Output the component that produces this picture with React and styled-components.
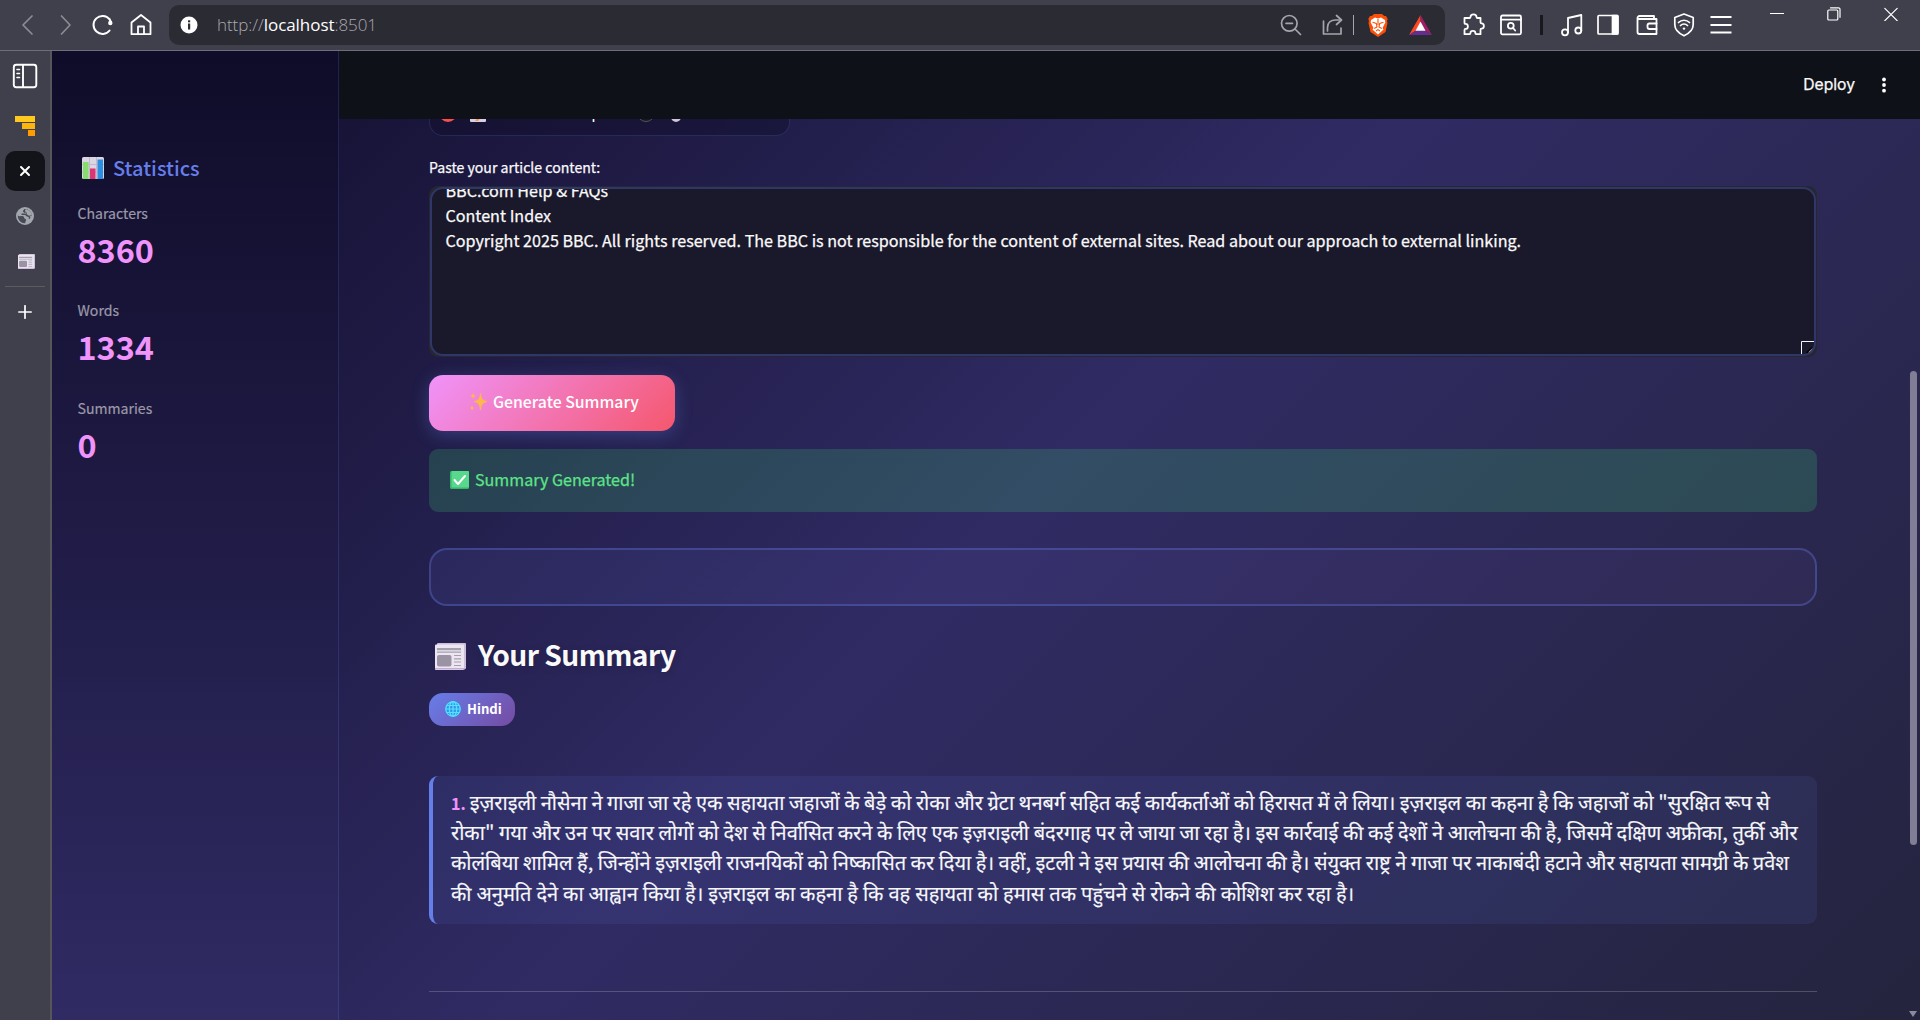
import React from 'react';
import styled, { createGlobalStyle, css } from 'styled-components';

const SANS = '"Noto Sans CJK SC", "Noto Sans", sans-serif';

const GlobalStyle = createGlobalStyle`
  * { box-sizing: border-box; }
  html, body { margin: 0; padding: 0; background: #24243e; overflow: hidden; }
  svg { display: block; flex: none; }
`;

const Window = styled.div`
  display: flex;
  flex-direction: column;
  width: 1920px;
  height: 1020px;
  overflow: hidden;
  font-family: ${SANS};
  color: #fafafa;
`;

/* ---------- browser toolbar ---------- */

const Toolbar = styled.header`
  display: flex;
  align-items: center;
  flex: none;
  height: 51px;
  padding-left: 13px;
  background: #3f404b;
  border-bottom: 1px solid #6d6e77;
`;

const NavButtons = styled.nav`
  display: flex;
  flex: none;
  gap: 10px;
  width: 156px;
`;

const AddressBar = styled.div`
  display: flex;
  align-items: center;
  flex: none;
  width: 1276px;
  height: 40px;
  padding: 0 7px 0 11px;
  border-radius: 10px;
  background: #2b2b33;
`;

const Url = styled.div`
  flex: 1;
  margin-left: 19px;
  font: 300 17px/24px "Open Sans", "Noto Sans", sans-serif;
  letter-spacing: -0.06px;
  color: #a9a9af;
  b { font-weight: 400; color: #fff; }
`;

const AddressTools = styled.div`
  display: flex;
  align-items: center;
`;

const ToolSlot = styled.div`
  display: flex;
  align-items: center;
  justify-content: center;
  flex: none;
  width: ${(p) => p.$w}px;
  height: 28px;
`;

const Rule = styled.span`
  width: ${(p) => p.$w}px;
  height: 20px;
  background: ${(p) => p.$c};
`;

const WindowButtons = styled.div`
  display: flex;
  align-self: flex-start;
  flex: none;
  height: 30px;
  margin-left: 11px;
  ${ToolSlot}:last-child { margin-left: 6px; }
`;

/* ---------- vertical tab strip ---------- */

const Body = styled.div`
  display: flex;
  flex: 1;
  min-height: 0;
`;

const Rail = styled.aside`
  display: flex;
  flex-direction: column;
  align-items: center;
  flex: none;
  width: 52px;
  background: #3f404b;
  border-right: 2px solid #55555a;
`;

const RailSlot = styled.div`
  display: flex;
  align-items: center;
  justify-content: center;
  flex: none;
  width: 40px;
  height: ${(p) => p.$h}px;
  padding-left: ${(p) => p.$shift || 0}px;
  ${(p) => p.$active && css`
    border-radius: 10px;
    background: #131419;
  `}
`;

const RailDivider = styled.div`
  width: 40px;
  height: 1px;
  margin-top: 4px;
  background: #5b5b60;
`;

/* ---------- application ---------- */

const AppShell = styled.div`
  display: flex;
  flex: 1;
  min-width: 0;
  background: linear-gradient(135deg, #0f0c29 0%, #302b63 50%, #24243e 100%);
`;

const Sidebar = styled.aside`
  flex: none;
  width: 287px;
  padding: 101px 25px 0 25.5px;
  background: linear-gradient(180deg, #0f0c29 0%, #302b63 100%);
  border-right: 1px solid rgba(102, 126, 234, 0.2);
`;

const SidebarTitle = styled.h3`
  display: flex;
  align-items: center;
  gap: 9px;
  height: 32px;
  margin: 0;
  padding-left: 4.5px;
  font-size: 20px;
  line-height: 32px;
  font-weight: 500;
  color: #667eea;
`;

const Stat = styled.div`
  height: 97.4px;
  padding-top: 17px;
`;

const StatLabel = styled.div`
  font-size: 14.1px;
  line-height: 24px;
  -webkit-text-stroke: 0.2px currentColor;
  color: #9b99a8;
`;

const StatValue = styled.div`
  margin-top: 4px;
  font-size: 32.4px;
  line-height: 40px;
  font-weight: 700;
  color: #f093fb;
`;

const Main = styled.main`
  display: flex;
  flex-direction: column;
  flex: 1;
  min-width: 0;
`;

const AppHeader = styled.div`
  display: flex;
  align-items: center;
  justify-content: flex-end;
  flex: none;
  height: 68px;
  padding-right: 27px;
  background: #0e1117;
`;

const Deploy = styled.span`
  margin-right: 20px;
  font: 400 15.7px/24px Inter, sans-serif;
  -webkit-text-stroke: 0.25px currentColor;
  color: #fafafa;
`;

const Scroller = styled.div`
  position: relative;
  flex: 1;
  min-height: 0;
  padding: 0 103px 0 90px;
  overflow: hidden;
`;

const ScrollThumb = styled.div`
  position: absolute;
  top: 252px;
  right: 3px;
  width: 7px;
  height: 474px;
  border-radius: 4px;
  background: #817d97;
`;

const ScrollArrow = styled.div`
  position: absolute;
  right: 3px;
  bottom: 3px;
  border: 4px solid transparent;
  border-top: 6px solid #8d8aa0;
  border-bottom: 0;
`;

const RadioGroup = styled.div`
  display: flex;
  align-items: center;
  width: 361px;
  height: 56px;
  margin-top: -39px;
  padding: 9px 9px 0;
  border: 1px solid rgba(102, 126, 234, 0.2);
  border-radius: 14px;
  background: rgba(15, 12, 41, 0.4);
`;

const Option = styled.label`
  display: flex;
  align-items: center;
  height: 28px;
  margin-right: 20px;
  svg { margin: 0 8px 0 13px; }
`;

const OptionText = styled.span`
  padding-bottom: 4px;
  font-size: 16.1px;
  line-height: 24px;
  white-space: nowrap;
`;

const RadioDot = styled.span`
  flex: none;
  width: 18px;
  height: 18px;
  border-radius: 50%;
  ${(p) => (p.$on
    ? css`border: 6px solid #ff4b4b; background: #fff;`
    : css`border: 1.5px solid #55565f; background: #16171f;`)}
`;

const FieldLabel = styled.div`
  margin-top: 19px;
  font-size: 14.1px;
  line-height: 24px;
  -webkit-text-stroke: 0.25px currentColor;
`;

const TextBox = styled.div`
  height: 171px;
  margin-top: 7px;
  padding: 1px;
  border-radius: 9px;
  background: #262730;
`;

const TextArea = styled.div`
  position: relative;
  height: 169px;
  padding: 0 13.5px;
  overflow: hidden;
  border: 2px solid #2f3768;
  border-radius: 13px;
  background: #1a182b;
`;

const TextLine = styled.div`
  font-size: 16.11px;
  line-height: 25.2px;
  white-space: nowrap;
  -webkit-text-stroke: 0.25px currentColor;
  &:first-child { margin-top: -11px; }
`;

const Grip = styled.svg`
  position: absolute;
  right: 0;
  bottom: 0;
`;

const PrimaryButton = styled.button`
  display: flex;
  align-items: center;
  gap: 5px;
  width: 246px;
  height: 56px;
  margin-top: 18px;
  padding: 0 0 2px 39px;
  border: 0;
  border-radius: 14px;
  background: linear-gradient(135deg, #f093fb 0%, #f5576c 100%);
  box-shadow: 0 4px 17px rgba(102, 126, 234, 0.32);
  font: 500 15.8px/28px ${SANS};
  color: #fff;
`;

const Alert = styled.div`
  display: flex;
  align-items: center;
  gap: 6px;
  height: 63px;
  margin-top: 18px;
  padding: 0 0 3px 21px;
  border-radius: 9px;
  background: rgba(61, 213, 109, 0.2);
  font-size: 16.1px;
  line-height: 28px;
  -webkit-text-stroke: 0.25px currentColor;
  color: #5de488;
  svg { margin-top: 1px; }
`;

const EmptyCard = styled.div`
  height: 58px;
  margin-top: 36px;
  border: 2px solid rgba(102, 126, 234, 0.33);
  border-radius: 18px;
  background: linear-gradient(135deg, rgba(102, 126, 234, 0.1), rgba(118, 75, 162, 0.1));
`;

const Heading = styled.h2`
  display: flex;
  align-items: center;
  gap: 12px;
  height: 40px;
  margin: 28px 0 0;
  padding-left: 6px;
  font-size: 28.2px;
  line-height: 40px;
  font-weight: 700;
  letter-spacing: -0.56px;
  text-shadow: 0 2px 9px rgba(0, 0, 0, 0.15);
  svg { margin-top: 5px; }
`;

const LanguageBadge = styled.div`
  display: flex;
  align-items: center;
  gap: 6px;
  width: 86px;
  height: 33px;
  margin-top: 19px;
  padding: 0 0 1px 16px;
  border-radius: 14px;
  background: linear-gradient(135deg, #667eea 0%, #764ba2 100%);
  font-size: 13.1px;
  line-height: 20px;
  font-weight: 700;
  color: #fff;
`;

const SummaryCard = styled.article`
  height: 148px;
  margin-top: 50px;
  padding: 11px 0 0 18px;
  border-left: 4px solid #667eea;
  border-radius: 9px;
  background: rgba(102, 126, 234, 0.1);
  font-size: 20px;
  -webkit-text-stroke: 0.15px currentColor;
  color: #f6f6fa;
`;

const SummaryLine = styled.div`
  height: 30.2px;
  line-height: 30.2px;
  white-space: nowrap;
  word-spacing: ${(p) => p.$gap}px;
`;

const Index = styled.b`
  margin-right: 4px;
  font-size: 16px;
  color: #f093fb;
`;

const Divider = styled.hr`
  height: 1px;
  margin: 67px 0 0;
  border: 0;
  background: rgba(250, 250, 250, 0.2);
`;

/* ---------- icons ---------- */

const Icon = ({ w = 28, h = w, box, stroke = '#fff', sw = 1.6, children }) => (
  <svg width={w} height={h} viewBox={box || `0 0 ${w} ${h}`} fill="none" stroke={stroke}
    strokeWidth={sw} strokeLinecap="round" strokeLinejoin="round">{children}</svg>
);

const Back = () => <Icon stroke="#8b8c94" sw={1.7}><path d="M19 5 10 14l9 9" /></Icon>;
const Forward = () => <Icon stroke="#8b8c94" sw={1.7}><path d="M10.500 5l8.500 9-8.500 9" /></Icon>;
const Reload = () => (
  <Icon sw={2}>
    <path d="M20.600 19.500A9 9 0 1 1 20.500 8.200" />
    <circle cx="21.300" cy="12" r="2.200" fill="#fff" stroke="none" />
    <path d="M20.500 8.200 22 11" />
  </Icon>
);
const Home = () => (
  <Icon sw={1.8}>
    <path d="M4.500 11.500 14 4l9.500 7.500v11.700h-19z" />
    <path d="M11 23v-7.500h6V23" />
  </Icon>
);
const Info = () => (
  <svg width="18" height="18" viewBox="0 0 18 18">
    <circle cx="9" cy="9" r="8.500" fill="#fff" />
    <rect x="8" y="7.500" width="2.200" height="6" fill="#2b2b33" />
    <rect x="8" y="4.300" width="2.200" height="2" fill="#2b2b33" />
  </svg>
);
const ZoomOut = () => (
  <Icon stroke="#a5a5ab" sw={1.7}>
    <circle cx="12.300" cy="12.300" r="7.800" /><path d="m18 18 5.500 5.500M9 12.300h6.500" />
  </Icon>
);
const Share = () => (
  <Icon stroke="#a5a5ab" sw={1.7}>
    <path d="M4.500 10v13h17.500v-6" /><path d="M8.500 20v-3.500c0-5 3.500-7.500 8-7.500H22" /><path d="M17.500 4.500 22.500 9l-5 4.500" />
  </Icon>
);
const Brave = () => (
  <svg width="20" height="23" viewBox="0 0 20 23">
    <path d="M6 0h8l2.200 2h1.800l1.700 3-.7 2 .5 2-2 9L10 23l-7.500-5-2-9L1 7 .3 5 2 2h1.800z" fill="#fb4f0a" />
    <path d="M10 4.500 13 3.500l4 2.500.3 2.500-2.800 5.500 1 1.500L10 20.500 4.500 15.500l1-1.500-2.800-5.500L3 6l4-2.500z" fill="#fff" />
    <path d="M4.500 8.300 8.300 9.500 9 13l-2.800 1.500M15.500 8.300 11.700 9.500 11 13l2.800 1.500M8 17l2-1.400 2 1.400M10 5v6" fill="none" stroke="#fb4f0a" strokeWidth="1.100" />
  </svg>
);
const Bat = () => (
  <svg width="23" height="20" viewBox="0 0 23 20">
    <path d="M11.500 0v7L7 15.500 0 20z" fill="#ff4724" />
    <path d="M11.500 0v7l4.500 8.500L23 20z" fill="#9e1f63" />
    <path d="M0 20l7-4.500h9l7 4.500z" fill="#662d91" />
    <path d="M11.500 6.500 16.500 15.700h-10z" fill="#fff" />
  </svg>
);
const Puzzle = () => (
  <Icon sw={1.8}>
    <path d="M4.500 7h5a1 1 0 0 0 1-1c0-3.600 6-3.600 6 0a1 1 0 0 0 1 1h3v4.300a1 1 0 0 0 1 1c3.200 0 3.200 5.400 0 5.400a1 1 0 0 0-1 1v4.500h-4.300a1 1 0 0 1-.8-1c0-3-5-3-5 0a1 1 0 0 1-.8 1H4.500v-4.300a1 1 0 0 1 1-1c3.200 0 3.200-5 0-5a1 1 0 0 1-1-1z" />
  </Icon>
);
const FindTab = () => (
  <Icon sw={1.8}>
    <rect x="4" y="4.500" width="20" height="18.800" rx="1.500" /><path d="M4 8.700h20" />
    <circle cx="13.800" cy="14.800" r="2.900" /><path d="m16 17 2.200 2.500" />
  </Icon>
);
const Music = () => (
  <Icon sw={1.8}>
    <circle cx="7" cy="21.300" r="3" /><circle cx="20.300" cy="19.500" r="3" /><path d="M10 21.300V7l13.300-3v15.500" />
  </Icon>
);
const Panel = () => (
  <Icon sw={1.7}>
    <rect x="4" y="4.500" width="20" height="18.500" rx="1" /><path d="M18.500 4.500H23.500v18.500h-5z" fill="#fff" />
  </Icon>
);
const Wallet = () => (
  <Icon sw={1.8}>
    <path d="M21 7.500V5H6.500a2 2 0 0 0-2 2v14a2 2 0 0 0 2 2h17V8H6" />
    <path d="M23.500 12.500h-7a2 2 0 0 0-2 2v1.500a2 2 0 0 0 2 2h7" />
  </Icon>
);
const Vpn = () => (
  <Icon sw={1.7}>
    <path d="m14 3 9.200 3.500v7c0 5-4.200 9-9.200 11.300C9 22.500 4.800 18.500 4.800 13.500v-7z" />
    <path d="M8.500 11.500c3-3 8-3 11 0M10.500 14.500c2-2 5-2 7 0" /><circle cx="14" cy="17.600" r="1.200" fill="#fff" stroke="none" />
  </Icon>
);
const Menu = () => <Icon sw={1.8}><path d="M3.500 6h21M3.500 14h21M3.500 21.500h21" strokeLinecap="butt" /></Icon>;
const Minimise = () => <Icon w={14} sw={1.200}><path d="M.5 6.500h13" /></Icon>;
const Restore = () => (
  <Icon w={14} sw={1.200}><rect x=".8" y="3" width="10" height="10" rx="1" /><path d="M3.500.8h8a1.500 1.500 0 0 1 1.500 1.500v8" /></Icon>
);
const Close = () => <Icon w={14} sw={1.200}><path d="m.8 1.300 12.400 12.400M13.200 1.300.800 13.700" /></Icon>;

const TabsPanel = () => (
  <Icon w={26} sw={1.900}>
    <rect x="1.800" y="1.800" width="22.500" height="22.500" rx="2.500" /><path d="M11 2v22" />
    <path d="M5 6.500h2.500M5 10.500h2.500M5 14.500h2.500" strokeWidth="1.600" />
  </Icon>
);
const PowerBars = () => (
  <svg width="20" height="20" viewBox="0 0 20 20">
    <path d="M0 0h20v6H0z" fill="#ffc81f" /><path d="M7 7h13v6H7z" fill="#fbb50c" /><path d="M13 14h7v6h-7z" fill="#ff9d00" />
  </svg>
);
const Globe = () => (
  <svg width="18" height="18" viewBox="0 0 18 18">
    <circle cx="9" cy="9" r="9" fill="#a3a6ad" />
    <path d="M1.800 8.200c1.400 1.700 3 .6 4.700.8 2 .2 1.200 2.200 2.500 2.700 1.200.5 1.500 1.500.8 2.300-.6.800-.3 1.500-.8 2.200C5.500 16.500 1.500 13 1.800 8.200zM8.300 2c-.5 1.300-1.800 1.500-1.200 2.700.6 1 1.700.2 2.500.9 1 .8.200 2.200 1.700 2.400 1.700.2 2.700 0 3.700 1.200l1-.2C16 5 12.500 1.600 8.300 2z" fill="#484a55" />
    <path d="M9.500 2.200c3.800.3 6.500 3.200 6.600 6.800-1.200-1.300-3.300-.2-4.600-1.100-1.200-.9-.2-1.900-1.300-2.600-1.100-.8-1.500-1.500-.7-3.100z" fill="#a3a6ad" />
    <path d="M5.500 7.200h3.700c1 0 1.300 1.800 2.800 1.900 1.600.1 2 1.400 1.200 2.500" fill="none" stroke="#484a55" strokeWidth="1.500" />
  </svg>
);
const Cross = () => <Icon w={12} sw={2}><path d="m2 2 8 8m0-8-8 8" /></Icon>;
const Plus = () => <Icon w={14} sw={1.700}><path d="M7 .8v12.400M.8 7h12.400" /></Icon>;

const Newspaper = ({ w, h }) => (
  <svg width={w} height={h} viewBox="0 0 31 27" preserveAspectRatio="none">
    <rect x="2" width="29" height="26" rx="1" fill="#cdbfd9" />
    <rect y="1.500" width="29" height="25.500" rx="1" fill="#ece6f3" />
    <path d="M0 25h30v1.500H0z" fill="#c5acd3" />
    <path d="M2 5h24v2.200H2zM2 8.500h24v1.300H2z" fill="#a69fad" />
    <rect x="2" y="12" width="14.500" height="11.500" rx="2" fill="#9b93a3" />
    <path d="M19 12.500h7M19 15.800h7M19 19h7M19 22.500h7" stroke="#a69fad" strokeWidth="1.200" />
  </svg>
);
const BarChart = () => (
  <svg width="22" height="22" viewBox="0 0 22 22">
    <rect width="22" height="22" rx="1.500" fill="#dcd5e3" />
    <path d="M7.500 0v22M14.500 0v22M0 7.500h22M0 15h22" stroke="#c2b9cc" strokeWidth="1" />
    <rect x="1" y="5" width="5.500" height="17" fill="#86dd6d" />
    <rect x="8" y="11.500" width="5.500" height="10.500" fill="#dd3572" />
    <rect x="15.500" y="2.500" width="5.500" height="19.500" fill="#2b90e2" />
  </svg>
);
const Sparkles = () => (
  <svg width="20" height="20" viewBox="0 0 20 20" fill="#fcb74d">
    <path d="M12.500 1.500c.7 5.500 2 7 6.500 8-4.500 1-5.800 3-6.500 8.500-.7-5.500-2-7.500-6.500-8.500 4.500-1 5.800-2.500 6.500-8z" stroke="#fcb74d" strokeWidth=".8" />
    <path d="M5 .5c.3 2.300 1 3 3 3.500-2 .5-2.700 1.200-3 3.500C4.700 5.200 4 4.500 2 4c2-.5 2.700-1.200 3-3.500zM4 13c.3 2 .8 2.600 2.500 3-1.700.4-2.200 1-2.500 3-.3-2-.8-2.600-2.500-3 1.700-.4 2.200-1 2.500-3z" />
  </svg>
);
const CheckBox = () => (
  <svg width="19" height="18" viewBox="0 0 19 18">
    <rect width="19" height="18" rx="1.500" fill="#37b36b" /><rect x="1.500" width="17.500" height="16.500" rx="1" fill="#57d88d" />
    <path d="m4.500 9 3.500 4 7-8" fill="none" stroke="#fff" strokeWidth="2" strokeLinecap="round" strokeLinejoin="round" />
  </svg>
);
const Meridians = () => (
  <svg width="16" height="16" viewBox="0 0 16 16">
    <circle cx="8" cy="8" r="8" fill="#2e9bea" />
    <g fill="none" stroke="#5cdcff" strokeWidth="1.200">
      <circle cx="8" cy="8" r="7.200" /><ellipse cx="8" cy="8" rx="3.700" ry="7.300" /><path d="M8 .5v15M.5 8h15M1.500 4.500h13M1.500 11.500h13" />
    </g>
  </svg>
);
const Memo = () => (
  <svg width="16" height="18" viewBox="0 0 16 18">
    <rect width="16" height="18" rx="1" fill="#d9cfe3" /><path d="M5 17 14 5l2 2-8 10z" fill="#f79a4c" />
  </svg>
);
const Link = () => (
  <svg width="16" height="18" viewBox="0 0 16 18" fill="none" stroke="#cfc4da" strokeWidth="3">
    <rect x="4.500" y="1.500" width="7" height="8" rx="3.500" /><rect x="4.500" y="8.500" width="7" height="8" rx="3.500" />
  </svg>
);
const Kebab = () => (
  <svg width="18" height="18" viewBox="0 0 18 18" fill="#fff">
    <circle cx="9" cy="3.500" r="1.900" /><circle cx="9" cy="9" r="1.900" /><circle cx="9" cy="14.700" r="1.900" />
  </svg>
);

/* ---------- data ---------- */

const stats = [['Characters', '8360'], ['Words', '1334'], ['Summaries', '0']];

const articleLines = [
  'BBC.com Help & FAQs',
  'Content Index',
  'Copyright 2025 BBC. All rights reserved. The BBC is not responsible for the content of external sites. Read about our approach to external linking.',
];

const summaryLines = [
  { gap: 0.07, text: 'इज़राइली नौसेना ने गाजा जा रहे एक सहायता जहाजों के बेड़े को रोका और ग्रेटा थनबर्ग सहित कई कार्यकर्ताओं को हिरासत में ले लिया। इज़राइल का कहना है कि जहाजों को "सुरक्षित रूप से' },
  { gap: 0.15, text: 'रोका" गया और उन पर सवार लोगों को देश से निर्वासित करने के लिए एक इज़राइली बंदरगाह पर ले जाया जा रहा है। इस कार्रवाई की कई देशों ने आलोचना की है, जिसमें दक्षिण अफ्रीका, तुर्की और' },
  { gap: 0.05, text: 'कोलंबिया शामिल हैं, जिन्होंने इज़राइली राजनयिकों को निष्कासित कर दिया है। वहीं, इटली ने इस प्रयास की आलोचना की है। संयुक्त राष्ट्र ने गाजा पर नाकाबंदी हटाने और सहायता सामग्री के प्रवेश' },
  { gap: 0.49, text: 'की अनुमति देने का आह्वान किया है। इज़राइल का कहना है कि वह सहायता को हमास तक पहुंचने से रोकने की कोशिश कर रहा है।' },
];

export default function App() {
  return (
    <Window>
      <GlobalStyle />
      <Toolbar>
        <NavButtons><Back /><Forward /><Reload /><Home /></NavButtons>
        <AddressBar>
          <Info />
          <Url>http://<b>localhost</b>:8501</Url>
          <AddressTools>
            <ToolSlot $w={43}><ZoomOut /></ToolSlot>
            <ToolSlot $w={41}><Share /></ToolSlot>
            <Rule $w={1} $c="#a5a5ab" />
            <ToolSlot $w={48}><Brave /></ToolSlot>
            <ToolSlot $w={36}><Bat /></ToolSlot>
          </AddressTools>
        </AddressBar>
        <ToolSlot $w={58}><Puzzle /></ToolSlot>
        <ToolSlot $w={16}><FindTab /></ToolSlot>
        <ToolSlot $w={44}><Rule $w={3} $c="#18181d" /></ToolSlot>
        <ToolSlot $w={18}><Music /></ToolSlot>
        <ToolSlot $w={54}><Panel /></ToolSlot>
        <ToolSlot $w={23}><Wallet /></ToolSlot>
        <ToolSlot $w={52}><Vpn /></ToolSlot>
        <ToolSlot $w={22}><Menu /></ToolSlot>
        <WindowButtons>
          <ToolSlot $w={68}><Minimise /></ToolSlot>
          <ToolSlot $w={45}><Restore /></ToolSlot>
          <ToolSlot $w={58}><Close /></ToolSlot>
        </WindowButtons>
      </Toolbar>
      <Body>
        <Rail>
          <RailSlot $h={50}><TabsPanel /></RailSlot>
          <RailSlot $h={50}><PowerBars /></RailSlot>
          <RailSlot $h={40} $active><Cross /></RailSlot>
          <RailSlot $h={50}><Globe /></RailSlot>
          <RailSlot $h={41} $shift={3}><Newspaper w={17} h={15} /></RailSlot>
          <RailDivider />
          <RailSlot $h={50}><Plus /></RailSlot>
        </Rail>
        <AppShell>
          <Sidebar>
            <SidebarTitle><BarChart />Statistics</SidebarTitle>
            {stats.map(([label, value]) => (
              <Stat key={label}>
                <StatLabel>{label}</StatLabel>
                <StatValue>{value}</StatValue>
              </Stat>
            ))}
          </Sidebar>
          <Main>
            <AppHeader><Deploy>Deploy</Deploy><Kebab /></AppHeader>
            <Scroller>
              <RadioGroup>
                <Option><RadioDot $on /><Memo /><OptionText>Direct Text Input</OptionText></Option>
                <Option><RadioDot /><Link /><OptionText>URL</OptionText></Option>
              </RadioGroup>
              <FieldLabel>Paste your article content:</FieldLabel>
              <TextBox>
                <TextArea>
                  {articleLines.map((line) => <TextLine key={line}>{line}</TextLine>)}
                  <Grip width="13" height="13" viewBox="0 0 13 13" fill="none">
                    <path d="M.5 13V.5H13" stroke="#f4f4f6" />
                    <path d="m6 12 5-5" stroke="#000" strokeWidth="2" />
                    <path d="m8 12 4-4" stroke="#b5b5b5" strokeWidth="2" />
                  </Grip>
                </TextArea>
              </TextBox>
              <PrimaryButton><Sparkles />Generate Summary</PrimaryButton>
              <Alert><CheckBox />Summary Generated!</Alert>
              <EmptyCard />
              <Heading><Newspaper w={31} h={27} />Your Summary</Heading>
              <LanguageBadge><Meridians />Hindi</LanguageBadge>
              <SummaryCard>
                {summaryLines.map(({ text, gap }, i) => (
                  <SummaryLine key={text} $gap={gap}>
                    {i === 0 && <Index>1.</Index>}
                    {text}
                  </SummaryLine>
                ))}
              </SummaryCard>
              <Divider />
              <ScrollThumb />
              <ScrollArrow />
            </Scroller>
          </Main>
        </AppShell>
      </Body>
    </Window>
  );
}
